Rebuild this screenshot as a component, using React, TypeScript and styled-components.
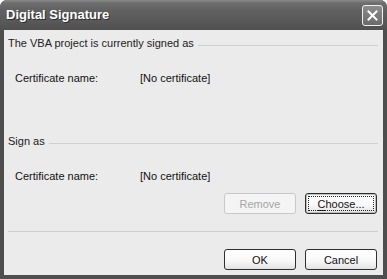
import React from 'react';
import styled, { createGlobalStyle } from 'styled-components';

const GlobalStyle = createGlobalStyle`
  html, body {
    margin: 0;
    padding: 0;
    background: #ffffff;
  }
  body {
    font-family: 'Liberation Sans', Arial, sans-serif;
    font-size: 11px;
    color: #111;
  }
`;

const StyledWindow = styled.div`
  width: 387px;
  height: 279px;
  box-sizing: border-box;
  display: flex;
  flex-direction: column;
  background: #4e4e4e;
  border-radius: 7px 7px 0 0;
  overflow: hidden;
`;

const StyledTitleBar = styled.div`
  height: 30px;
  flex: none;
  display: flex;
  align-items: center;
  justify-content: space-between;
  padding: 0 4px 0 6px;
  background: linear-gradient(
    to bottom,
    #8a8a8a 0px,
    #6e6e6e 3px,
    #616161 10px,
    #585858 22px,
    #505050 30px
  );
`;

const StyledTitle = styled.span`
  font-family: 'Liberation Sans', Arial, sans-serif;
  font-weight: 700;
  font-size: 13px;
  color: #fff;
  text-shadow: 1px 1px 0 #2e2e2e;
  padding-bottom: 1px;
`;

const StyledClose = styled.div`
  width: 19px;
  height: 19px;
  border: 1px solid #f0f0f0;
  border-radius: 3px;
  background: linear-gradient(to bottom, #8c8c8c, #6a6a6a);
  display: flex;
  align-items: center;
  justify-content: center;
  margin-top: 1px;
`;

const StyledBody = styled.div`
  flex: 1;
  margin: 0 4px 4px 4px;
  background: #ebebeb;
  padding: 6px 5px 0 4px;
  display: flex;
  flex-direction: column;
`;

const StyledHeading = styled.div<{ $top?: number }>`
  display: flex;
  align-items: center;
  gap: 4px;
  height: 14px;
  margin-top: ${(p) => p.$top ?? 0}px;
  color: #222;
  &::after {
    content: '';
    flex: 1;
    height: 1px;
    margin-top: 4px;
    background: #cfcfcf;
  }
`;

const StyledRow = styled.div<{ $top: number }>`
  display: grid;
  grid-template-columns: 125px 1fr;
  padding-left: 7px;
  margin-top: ${(p) => p.$top}px;
  height: 14px;
  line-height: 14px;
`;

const StyledButtonRow = styled.div<{ $top: number }>`
  display: flex;
  justify-content: flex-end;
  gap: 9px;
  margin-top: ${(p) => p.$top}px;
  padding-right: 1px;
`;

const StyledButton = styled.button<{ $disabled?: boolean; $focused?: boolean }>`
  width: 72px;
  height: 21px;
  box-sizing: border-box;
  font-family: 'Liberation Sans', Arial, sans-serif;
  font-size: 11px;
  padding: 0;
  border-radius: 3px;
  border: 1px solid ${(p) => (p.$disabled ? '#c8c8c8' : '#2e2e2e')};
  color: ${(p) => (p.$disabled ? '#a5a5a5' : '#111')};
  background: ${(p) =>
    p.$disabled
      ? '#f4f4f4'
      : 'linear-gradient(to bottom, #ffffff 0%, #f7f7f7 60%, #e2e2e2 100%)'};
  box-shadow: ${(p) => (p.$focused ? 'inset 0 0 0 1px #bdbdbd' : 'none')};
  display: flex;
  align-items: center;
  justify-content: center;
  position: relative;
  &::after {
    content: '';
    display: ${(p) => (p.$focused ? 'block' : 'none')};
    position: absolute;
    inset: 2px;
    border: 1px dotted #222;
  }
  u {
    text-decoration: underline;
    text-underline-offset: 2px;
  }
`;

const StyledSeparator = styled.div`
  height: 1px;
  background: #cdcdcd;
  margin: 17px 0 0 0;
`;

const CloseIcon = () => (
  <svg width="11" height="11" viewBox="0 0 11 11">
    <path d="M1.5 1.5 L9.5 9.5 M9.5 1.5 L1.5 9.5" stroke="#fff" strokeWidth="2" strokeLinecap="square" />
  </svg>
);

const App = () => {
  return (
    <>
      <GlobalStyle />
      <StyledWindow>
        <StyledTitleBar>
          <StyledTitle>Digital Signature</StyledTitle>
          <StyledClose>
            <CloseIcon />
          </StyledClose>
        </StyledTitleBar>
        <StyledBody>
          <StyledHeading>The VBA project is currently signed as</StyledHeading>
          <StyledRow $top={21}>
            <span>Certificate name:</span>
            <span>[No certificate]</span>
          </StyledRow>
          <StyledHeading $top={49}>Sign as</StyledHeading>
          <StyledRow $top={21}>
            <span>Certificate name:</span>
            <span>[No certificate]</span>
          </StyledRow>
          <StyledButtonRow $top={10}>
            <StyledButton $disabled>Remove</StyledButton>
            <StyledButton $focused>
              <span>
                <u>C</u>hoose...
              </span>
            </StyledButton>
          </StyledButtonRow>
          <StyledSeparator />
          <StyledButtonRow $top={17}>
            <StyledButton>OK</StyledButton>
            <StyledButton>Cancel</StyledButton>
          </StyledButtonRow>
        </StyledBody>
      </StyledWindow>
    </>
  );
};

export default App;
